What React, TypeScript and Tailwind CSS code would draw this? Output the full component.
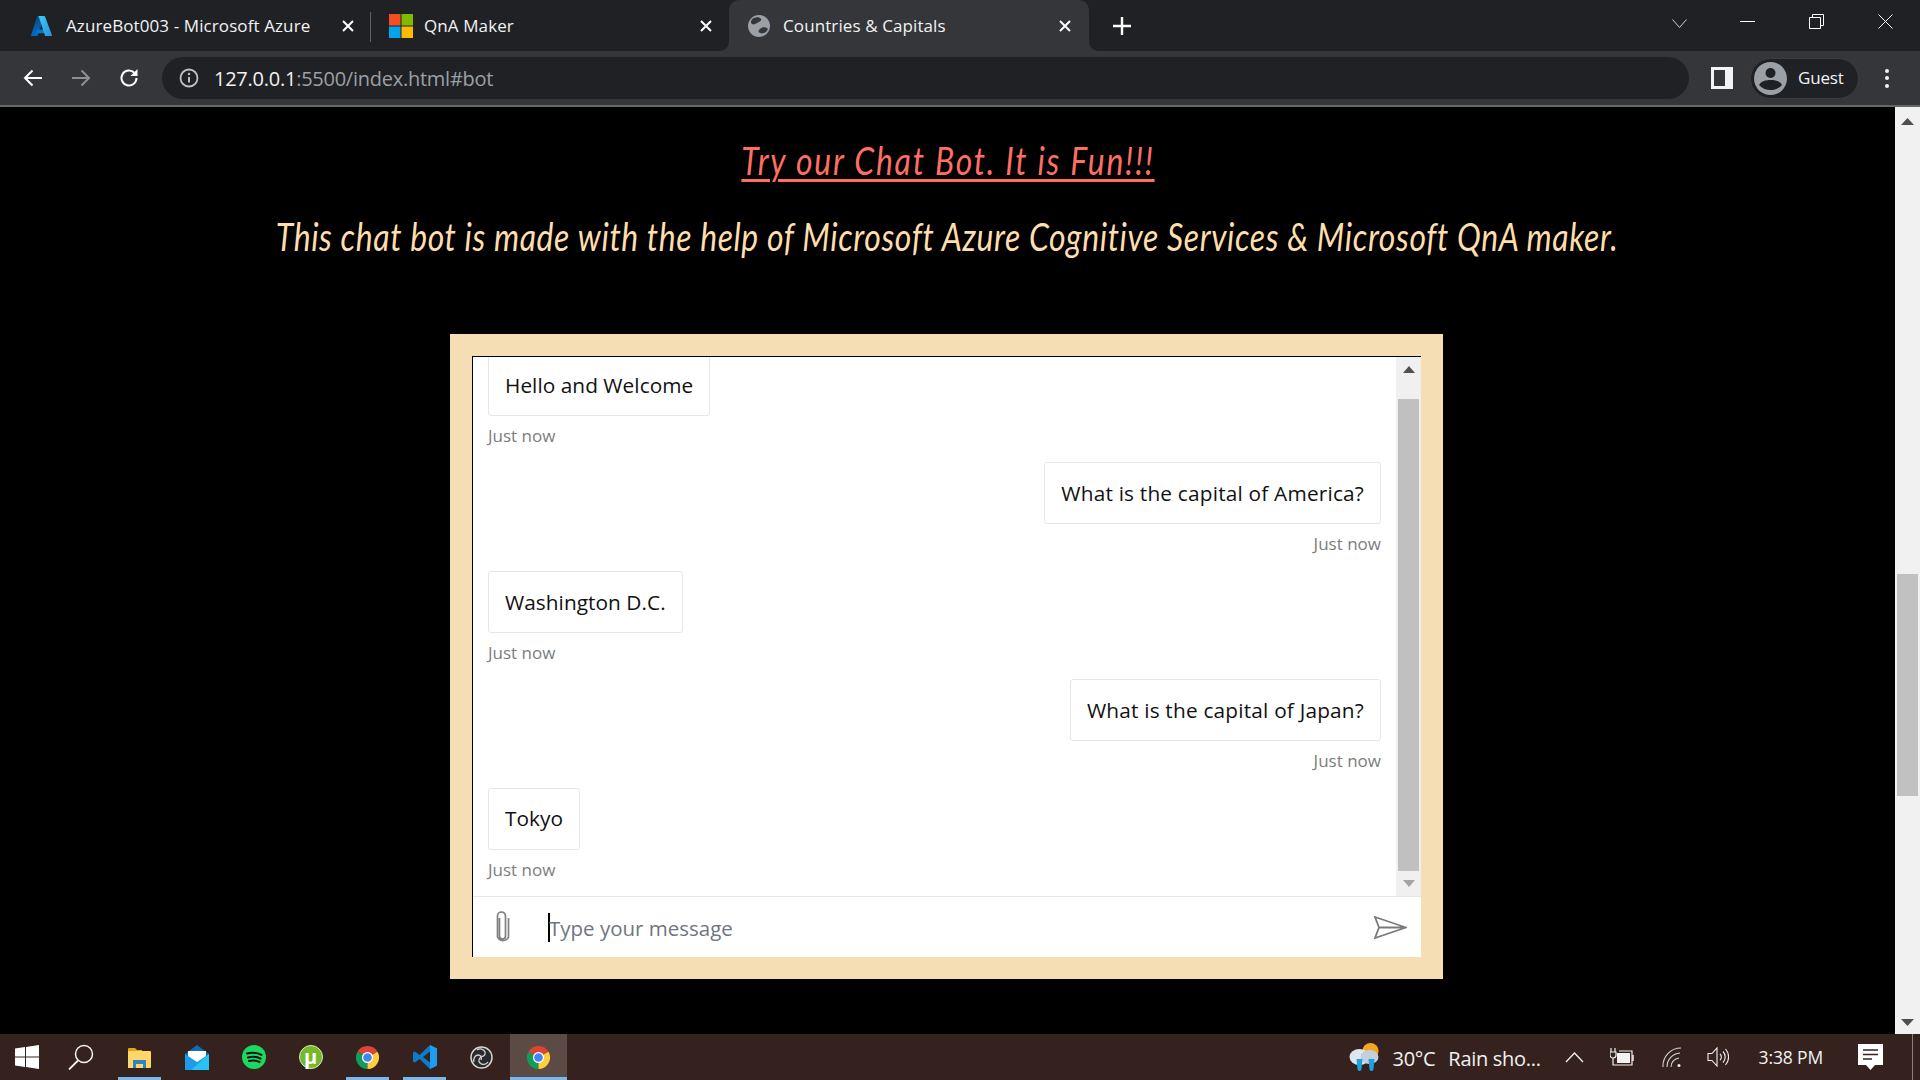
import React from "react";

const ui = "font-['Open_Sans','Noto_Sans',sans-serif]";

function Azure() {
  return (
    <svg width="22" height="20" viewBox="0 0 22 20" className="shrink-0">
      <defs>
        <linearGradient id="az1" x1="0" y1="0" x2="0" y2="1"><stop offset="0" stopColor="#114a8b" /><stop offset="1" stopColor="#0669bc" /></linearGradient>
        <linearGradient id="az2" x1="0" y1="0" x2="1" y2="1"><stop offset="0" stopColor="#3ccbf4" /><stop offset="1" stopColor="#2892df" /></linearGradient>
      </defs>
      <path d="M7 0h6.5L6.7 19.4a1 1 0 0 1-.9.6H.6a.6.6 0 0 1-.6-.8L6.2.6A.9.9 0 0 1 7 0z" fill="url(#az1)" />
      <path d="M16.5 13.4H6.2l-1 3.2a.5.5 0 0 0 .4.7H13.3l3.2-3.9z" fill="#0078d4" />
      <path d="M14 .6a.9.9 0 0 0-.8-.6H6.9a.9.9 0 0 1 .8.6l6.2 18.6a.6.6 0 0 1-.6.8h7.1a.6.6 0 0 0 .6-.8L14 .6z" fill="url(#az2)" />
    </svg>
  );
}

function MsLogo() {
  return (
    <svg width="24" height="24" viewBox="0 0 24 24" className="shrink-0">
      <rect width="11.5" height="11.5" fill="#f25022" />
      <rect x="12.5" width="11.5" height="11.5" fill="#7fba00" />
      <rect y="12.5" width="11.5" height="11.5" fill="#00a4ef" />
      <rect x="12.5" y="12.5" width="11.5" height="11.5" fill="#ffb900" />
    </svg>
  );
}

function Globe() {
  return (
    <svg width="22" height="22" viewBox="0 0 22 22" className="shrink-0">
      <circle cx="11" cy="11" r="11" fill="#9aa0a6" />
      <path d="M6 3c3-1 6-1 7 1s-2 3-4 4-3 2-5 1-1-5 2-6zM12 14c2-2 5-2 7-1s-1 5-3 5-2 1-4 0-2-2 0-4z" fill="#35363a" />
    </svg>
  );
}

function Close({ className = "" }: { className?: string }) {
  return (
    <svg width="14" height="14" viewBox="0 0 14 14" className={"shrink-0 " + className}>
      <path d="M2 2l10 10M12 2L2 12" stroke="#ffffff" strokeWidth="2" />
    </svg>
  );
}

function Chrome({ size = 24 }: { size?: number }) {
  return (
    <svg width={size} height={size} viewBox="0 0 48 48" className="shrink-0">
      <path d="M24 24 L44.8 12 A24 24 0 0 0 3.2 12 Z" fill="#db4437" />
      <path d="M24 24 L3.2 12 A24 24 0 0 0 24 48 Z" fill="#0f9d58" />
      <path d="M24 24 L24 48 A24 24 0 0 0 44.8 12 Z" fill="#ffcd40" />
      <circle cx="24" cy="24" r="11.5" fill="#ffffff" />
      <circle cx="24" cy="24" r="9" fill="#4285f4" />
    </svg>
  );
}

function Message({ text, right }: { text: string; right?: boolean }) {
  return (
    <div className={"h-[108.4px] shrink-0 flex flex-col " + (right ? "items-end" : "items-start")}>
      <div className={"h-[62px] px-[16px] pt-[1px] flex items-center border border-[#e6e6e6] rounded-[3px] bg-white text-[#111111] text-[20.8px] whitespace-nowrap " + (right ? "tracking-[0.2px]" : "tracking-[0.05px]")}>
        {text}
      </div>
      <div className="mt-[8px] text-[17px] leading-[24px] text-[#7d7d7d]">Just now</div>
    </div>
  );
}

function TaskCell({ children, line, active }: { children: React.ReactNode; line?: boolean; active?: boolean }) {
  return (
    <div className={"relative w-[57px] h-full flex items-center justify-center " + (active ? "bg-[#5c4a45]" : "")}>
      {children}
      {line && <div className={"absolute bottom-0 h-[3px] bg-[#76b9ed] " + (active ? "left-0 right-0" : "left-[7px] right-[7px]")} />}
    </div>
  );
}

export default function App() {
  return (
    <div className={"w-[1920px] h-[1080px] flex flex-col overflow-hidden bg-black " + ui}>
      {/* Tab strip */}
      <div className="h-[51px] shrink-0 bg-[#202124] flex items-stretch text-[#f1f3f4] text-[17px] tracking-[0.1px]">
        <div className="w-[371px] flex items-center pl-[31px] pr-[16px] relative">
          <Azure />
          <span className="ml-[13px] flex-1 whitespace-nowrap">AzureBot003 - Microsoft Azure</span>
          <Close />
          <div className="absolute right-0 top-[12px] h-[30px] w-[1px] bg-[#5f6368]" />
        </div>
        <div className="w-[358px] flex items-center pl-[18px] pr-[16px]">
          <MsLogo />
          <span className="ml-[11px] flex-1 whitespace-nowrap">QnA Maker</span>
          <Close />
        </div>
        <div className="relative w-[360px] h-[51px] bg-[#35363a] rounded-t-[10px] flex items-center pl-[19px] pr-[17px]">
          <svg width="9" height="9" viewBox="0 0 9 9" className="absolute bottom-0 -left-[9px]"><path d="M9 0v9H0a9 9 0 0 0 9-9z" fill="#35363a" /></svg>
          <svg width="9" height="9" viewBox="0 0 9 9" className="absolute bottom-0 -right-[9px]"><path d="M0 0v9h9a9 9 0 0 1-9-9z" fill="#35363a" /></svg>
          <Globe />
          <span className="ml-[13px] flex-1 whitespace-nowrap">Countries &amp; Capitals</span>
          <Close />
        </div>
        <div className="ml-[24px] flex items-center">
          <svg width="18" height="18" viewBox="0 0 18 18"><path d="M9 0v18M0 9h18" stroke="#ffffff" strokeWidth="2.4" /></svg>
        </div>
        <div className="flex-1" />
        <div className="flex items-start pt-[14px] pr-[27px]">
          <svg width="15" height="15" viewBox="0 0 15 15" className="mt-[2px]"><path d="M0.5 3.5l7 8 7-8" fill="none" stroke="#d0d0d0" strokeWidth="1" /></svg>
          <svg width="15" height="15" viewBox="0 0 15 15" className="ml-[53px]"><path d="M0 7.5h15" stroke="#ffffff" strokeWidth="1" /></svg>
          <svg width="15" height="15" viewBox="0 0 15 15" className="ml-[54px]"><path d="M0.5 3.5h11v11h-11zM3.5 3.5v-3h11v11h-3" fill="none" stroke="#ffffff" strokeWidth="1" /></svg>
          <svg width="15" height="15" viewBox="0 0 15 15" className="ml-[54px]"><path d="M0.5 0.5l14 14M14.5 0.5l-14 14" stroke="#ffffff" strokeWidth="1" /></svg>
        </div>
      </div>

      {/* Toolbar */}
      <div className="h-[54px] shrink-0 bg-[#35363a] flex items-center">
        <svg width="20" height="18" viewBox="0 0 20 18" className="ml-[23px] shrink-0"><path d="M19 9H2M9.5 1.5L2 9l7.5 7.5" fill="none" stroke="#ffffff" strokeWidth="2" /></svg>
        <svg width="20" height="18" viewBox="0 0 20 18" className="ml-[28px] shrink-0"><path d="M1 9h17M10.5 1.5L18 9l-7.5 7.5" fill="none" stroke="#8f9093" strokeWidth="2" /></svg>
        <svg width="20" height="20" viewBox="0 0 20 20" className="ml-[28px] shrink-0"><path d="M17.5 10a7.5 7.5 0 1 1-2.2-5.3" fill="none" stroke="#ffffff" strokeWidth="2" /><path d="M18.500 1v7h-7z" fill="#ffffff" /></svg>
        <div className="ml-[23px] w-[1527px] h-[42px] rounded-full bg-[#202124] flex items-center pl-[17px] shrink-0">
          <svg width="20" height="20" viewBox="0 0 20 20" className="shrink-0"><circle cx="10" cy="10" r="8.5" fill="none" stroke="#bdc1c6" strokeWidth="1.8" /><path d="M10 9v5.5" stroke="#bdc1c6" strokeWidth="2" /><circle cx="10" cy="6" r="1.2" fill="#bdc1c6" /></svg>
          <span className="ml-[15px] mt-[1px] text-[20px] tracking-[-0.25px] whitespace-nowrap text-[#f1f3f4]">127.0.0.1<span className="text-[#9aa0a6]">:5500/index.html#bot</span></span>
        </div>
        <div className="ml-[22px] w-[22px] h-[22px] bg-[#f1f3f4] shrink-0 flex items-center pl-[3px]">
          <div className="w-[11px] h-[16px] bg-[#35363a]" />
        </div>
        <div className="ml-[17px] w-[109px] h-[41px] rounded-full bg-[#202124] border border-[#3c3d41] flex items-center pl-[3px] shrink-0">
          <svg width="33" height="33" viewBox="0 0 33 33" className="shrink-0"><circle cx="16.5" cy="16.5" r="16.5" fill="#9aa0a6" /><circle cx="16.5" cy="11" r="5" fill="#202124" /><path d="M5 23c2-4 7-5 11.5-5s9.5 1 11.5 5c-2.5 3-7 5-11.5 5S7.500 26 5 23z" fill="#202124" /></svg>
          <span className="ml-[11px] text-[#f1f3f4] text-[17px] tracking-[-0.2px]">Guest</span>
        </div>
        <div className="ml-[26px] flex flex-col gap-[3.5px] shrink-0">
          <div className="w-[4px] h-[4px] rounded-full bg-[#f1f3f4]" />
          <div className="w-[4px] h-[4px] rounded-full bg-[#f1f3f4]" />
          <div className="w-[4px] h-[4px] rounded-full bg-[#f1f3f4]" />
        </div>
      </div>
      <div className="h-[2px] shrink-0 bg-[#66676a]" />

      {/* Page */}
      <div className="flex-1 min-h-0 flex">
        <div className="flex-1 min-w-0 flex flex-col items-center bg-black">
          <div className="mt-[27px] h-[52px] text-[38px] leading-[52px] italic font-normal underline decoration-[3px] underline-offset-[4px] text-[#ff6f61] tracking-[2.1px] whitespace-nowrap scale-x-[0.84] font-['Lato',sans-serif]">
            Try our Chat Bot. It is Fun!!!
          </div>
          <div className="mt-[24px] h-[52px] text-[38px] leading-[52px] italic font-normal text-[#ffdead] tracking-[0.73px] whitespace-nowrap scale-x-[0.84] font-['Lato',sans-serif]">
            This chat bot is made with the help of Microsoft Azure Cognitive Services &amp; Microsoft QnA maker.
          </div>
          <div className="mt-[72px] w-[993px] h-[645px] bg-[#f5deb3] p-[22px] shrink-0 self-start ml-[450px]">
            <div className="h-full bg-white border-t border-l border-black flex flex-col">
              <div className="flex-1 min-h-0 flex">
                <div className="flex-1 min-w-0 overflow-hidden px-[15px]">
                  <div className="-mt-[3px] flex flex-col">
                    <Message text="Hello and Welcome" />
                    <Message text="What is the capital of America?" right />
                    <Message text="Washington D.C." />
                    <Message text="What is the capital of Japan?" right />
                    <Message text="Tokyo" />
                  </div>
                </div>
                <div className="w-[25px] bg-[#f0f0f0] flex flex-col items-center shrink-0 pt-[9px]">
                  <svg width="12" height="7" viewBox="0 0 12 7"><path d="M6 0l6 7H0z" fill="#505050" /></svg>
                  <div className="mt-[26px] w-[21px] h-[472px] bg-[#c0c0c0]" />
                  <svg width="12" height="7" viewBox="0 0 12 7" className="mt-[9px]"><path d="M0 0h12L6 7z" fill="#a3a3a3" /></svg>
                </div>
              </div>
              <div className="h-[61px] shrink-0 border-t border-[#e6e6e6] flex items-center">
                <svg width="17" height="34" viewBox="0 0 17 34" className="ml-[21px] shrink-0">
                  <path d="M5.500 8v18a3 3 0 0 0 6 0V6a4 4 0 0 0-8 0v21a6 6 0 0 0 11 0V8" fill="none" stroke="#7f7f7f" strokeWidth="1.7" />
                </svg>
                <div className="ml-[37px] w-[2px] h-[29px] bg-black shrink-0" />
                <span className="-ml-[1px] mt-[3px] text-[20.5px] text-[#6f7680] whitespace-nowrap">Type your message</span>
                <div className="flex-1" />
                <svg width="33" height="23" viewBox="0 0 33 23" className="mr-[14px] shrink-0">
                  <path d="M1 1l31 10.500L1 22l4-10.500zM5 11.500h27" fill="none" stroke="#7b7b7b" strokeWidth="1.8" />
                </svg>
              </div>
            </div>
          </div>
        </div>
        <div className="w-[25px] shrink-0 bg-[#f1f1f1] flex flex-col items-center">
          <svg width="13" height="7" viewBox="0 0 13 7" className="mt-[11px]"><path d="M6.500 0L13 7H0z" fill="#505050" /></svg>
          <div className="mt-[449px] w-[21px] h-[222px] bg-[#c1c1c1]" />
          <div className="flex-1" />
          <svg width="13" height="7" viewBox="0 0 13 7" className="mb-[8px]"><path d="M0 0h13L6.500 7z" fill="#505050" /></svg>
        </div>
      </div>

      {/* Taskbar */}
      <div className="h-[46px] shrink-0 bg-[#35221e] flex items-stretch text-[#f2f2f2]">
        <div className="w-[54px] flex items-center justify-center">
          <svg width="24" height="24" viewBox="0 0 24 24"><path d="M0 3.400l10-1.400v9.500H0zM11 1.900L24 0v11.500H11zM0 12.500h10V22L0 20.600zM11 12.500h13V24l-13-1.900z" fill="#ffffff" /></svg>
        </div>
        <div className="w-[54px] flex items-center justify-center">
          <svg width="26" height="26" viewBox="0 0 26 26"><circle cx="16" cy="10" r="8.500" fill="none" stroke="#f2f2f2" strokeWidth="1.500" /><path d="M10 16.500L1 25.500" stroke="#f2f2f2" strokeWidth="1.800" /></svg>
        </div>
        <div className="w-[3px]" />
        <TaskCell line>
          <svg width="23" height="21" viewBox="0 0 23 21"><path d="M0 2a1 1 0 0 1 1-1h6l2 2h5v3H0z" fill="#e8a21c" /><path d="M0 4h22a1 1 0 0 1 1 1v15a1 1 0 0 1-1 1H0z" fill="#ffd767" /><path d="M5 21v-8h13v8h-3v-4H8v4z" fill="#2f83c8" /></svg>
        </TaskCell>
        <TaskCell>
          <svg width="24" height="25" viewBox="0 0 24 25"><path d="M0 9L12 0l12 9v16H0z" fill="#0f6cbd" /><path d="M3 6h18v7l-9 5-9-5z" fill="#ffffff" /><path d="M0 9l12 8 12-8v16H0z" fill="#1e9bea" /><path d="M24 9v16H6z" fill="#28c2f4" /></svg>
        </TaskCell>
        <TaskCell>
          <svg width="24" height="24" viewBox="0 0 24 24"><circle cx="12" cy="12" r="12" fill="#1ed760" /><path d="M5 8.500c5-1.300 10-1 14.500 1.300M6 12.500c4-1 9-.8 12.500 1.200M7 16c3.500-.8 7.500-.6 10.500 1" fill="none" stroke="#111111" strokeWidth="2" strokeLinecap="round" /></svg>
        </TaskCell>
        <TaskCell>
          <div className="w-[24px] h-[24px] rounded-full bg-[#76b82a] border border-[#d9e9c4] flex items-center justify-center text-white font-bold text-[20px] leading-none">µ</div>
        </TaskCell>
        <TaskCell line><Chrome size={23} /></TaskCell>
        <TaskCell line>
          <svg width="24" height="24" viewBox="0 0 24 24"><path d="M17 0l7 3.500v17L17 24 6.500 14 2 17.500 0 16.500v-9l2-1L6.500 10z" fill="#0a7cc8" /><path d="M17 6.500L10 12l7 5.500z" fill="#35221e" /><path d="M17 0l7 3.500v17L17 24z" fill="#1f9cf0" /></svg>
        </TaskCell>
        <TaskCell>
          <svg width="23" height="23" viewBox="0 0 23 23"><circle cx="11.500" cy="11.500" r="10.500" fill="#2a2a2e" stroke="#d4d4d4" strokeWidth="1.500" /><path d="M7 4c3-2 7-1 8 2s-2 5-4 4M4 16c-1-3 1-7 4-7s4 3 3 5M18 16c-2 3-6 3-8 1s-1-5 1-6" fill="none" stroke="#d4d4d4" strokeWidth="1.300" /></svg>
        </TaskCell>
        <TaskCell line active><Chrome size={23} /></TaskCell>
        <div className="flex-1" />
        <div className="flex items-center text-[#f2f2f2]">
          <svg width="33" height="30" viewBox="0 0 32 30" className="shrink-0">
            <circle cx="22" cy="9" r="8" fill="#f5a623" />
            <ellipse cx="11" cy="15" rx="10" ry="8" fill="#dfe6ee" />
            <ellipse cx="21" cy="15" rx="9" ry="7" fill="#c4cfdb" />
            <path d="M8 17h6l-1 10a2 2 0 0 1-4 0zM20 17h6l-1 10a2 2 0 0 1-4 0z" fill="#1fa0e3" />
          </svg>
          <span className="ml-[12px] text-[20px] tracking-[-0.3px] mt-[3px]">30°C</span>
          <span className="ml-[13px] text-[20px] tracking-[-0.3px] whitespace-nowrap mt-[3px]">Rain sho...</span>
          <svg width="19" height="11" viewBox="0 0 19 11" className="ml-[24px] shrink-0"><path d="M1 10l8.500-9L18 10" fill="none" stroke="#f2f2f2" strokeWidth="1.300" /></svg>
          <svg width="24" height="18" viewBox="0 0 24 18" className="ml-[26px] shrink-0"><path d="M1 0v4M5 0v4M0 4h6v3a3 3 0 0 1-6 0zM3 10v7h19V3H9" fill="none" stroke="#f2f2f2" strokeWidth="1.200" /><rect x="7" y="5" width="13" height="10" fill="#f2f2f2" /><path d="M23 7v6" stroke="#f2f2f2" strokeWidth="1.500" /></svg>
          <svg width="19" height="20" viewBox="0 0 19 20" className="ml-[28px] shrink-0"><path d="M1 20a18 18 0 0 1 18-19M5 20a14 14 0 0 1 13-14M9 20a9 9 0 0 1 8-9" fill="none" stroke="#d8d8d8" strokeWidth="1.100" /><circle cx="17" cy="18.500" r="1.500" fill="#f2f2f2" /></svg>
          <svg width="22" height="20" viewBox="0 0 22 20" className="ml-[26px] shrink-0"><path d="M1 6.500h4L10 1v18l-5-5.500H1zM13 7a4 4 0 0 1 0 6M16 4.500a8 8 0 0 1 0 11M18.500 2a12 12 0 0 1 0 16" fill="none" stroke="#f2f2f2" strokeWidth="1.100" /></svg>
          <span className="ml-[30px] text-[17.500px] tracking-[-0.15px] whitespace-nowrap">3:38 PM</span>
          <svg width="25" height="26" viewBox="0 0 25 26" className="ml-[35px] shrink-0"><path d="M0 0h25v21h-8l-4.500 5L8 21H0z" fill="#ffffff" /><path d="M5 6h15M5 10.500h15M5 15h9" stroke="#35221e" strokeWidth="1.300" /></svg>
          <div className="ml-[29px] w-[1px] h-full bg-[#8a807d]" />
          <div className="w-[7px]" />
        </div>
      </div>
    </div>
  );
}
